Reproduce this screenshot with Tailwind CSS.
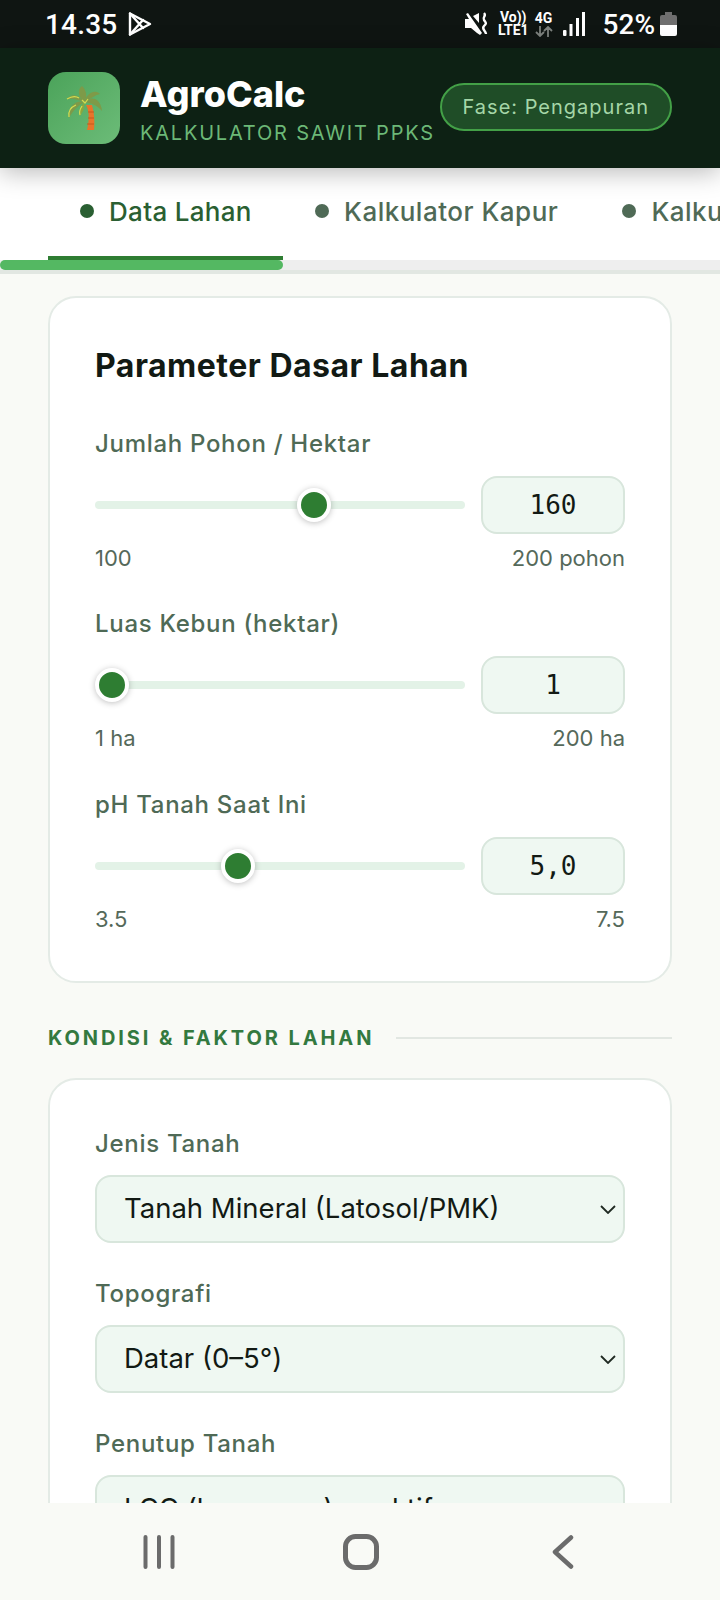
<!DOCTYPE html>
<html lang="en">
<head>
  <meta charset="UTF-8" />
  <meta name="viewport" content="width=device-width, initial-scale=1" />
  <title>AgroCalc</title>
  <script src="https://cdn.jsdelivr.net/npm/@tailwindcss/browser@4"></script>
</head>
<body class="bg-[#f9faf6] text-[#121a14] font-['Inter','Noto_Sans',sans-serif]">
  <div class="flex flex-col w-[720px] h-[1600px] overflow-hidden">
    <!-- status bar -->
    <div class="shrink-0 h-12 bg-[#0f1512] flex items-center pl-[45px] pr-[43px] text-white font-['Roboto',sans-serif]">
      <span class="text-[28px] font-medium tracking-[0.2px] pt-[2px]">14.35</span>
      <svg class="ml-[11px] w-[24px] h-[26px]" viewBox="0 0 24 26" fill="none" stroke="white" stroke-width="2.400" stroke-linejoin="round" stroke-linecap="round"><path d="M2 2.500v21l20-10.500z"/><path d="M2 2.500 15 17M2 23.500 15 9"/></svg>
      <div class="ml-auto flex items-center">
        <svg class="w-[25px] h-[24px]" viewBox="0 0 25 24">
          <path d="M0 7h4l-3-5 2-1 14 20-2 2-3-2-6-5H0z M8 4l6-3v10z" fill="white"/>
          <path d="M19 1c3 3-2 4 0 7s3 3 0 6 2 5 2 8" fill="none" stroke="white" stroke-width="2.400"/>
        </svg>
        <div class="ml-[8px] flex flex-col items-center text-[14px] leading-[13px] font-bold"><span>Vo))</span><span>LTE1</span></div>
        <div class="ml-[6px] flex flex-col items-center text-[14px] leading-[13px] font-bold">
          <span>4G</span>
          <svg class="w-[18px] h-[11px] mt-[1px]" viewBox="0 0 18 11" fill="none" stroke="#7d827e" stroke-width="1.800"><path d="M5 0v10M1 6l4 4 4-4M13 11V1M9 5l4-4 4 4"/></svg>
        </div>
        <svg class="ml-[10px] w-[22px] h-[24px]" viewBox="0 0 22 24" fill="white"><rect x="0" y="18" width="3.500" height="6" rx="1"/><rect x="6.500" y="12" width="3" height="12"/><rect x="13" y="6" width="3" height="18"/><rect x="19" y="0" width="3" height="24"/></svg>
        <span class="ml-[18px] text-[28px] font-medium pt-[2px]">52%</span>
        <svg class="ml-[5px] w-[17px] h-[24px]" viewBox="0 0 17 24"><path d="M5 0h7v3h3a2 2 0 0 1 2 2v8H0V5a2 2 0 0 1 2-2h3z" fill="#6e6e6e"/><path d="M0 13h17v9a2 2 0 0 1-2 2H2a2 2 0 0 1-2-2z" fill="white"/></svg>
      </div>
    </div>

    <!-- header -->
    <header class="relative z-10 shrink-0 h-[120px] bg-[#0d2114] flex items-center pl-12 pr-12 shadow-[0_4px_24px_rgba(0,0,0,0.28)]">
      <div class="size-[72px] rounded-[18px] bg-gradient-to-br from-[#4ba35a] to-[#6cbc78]">
        <svg class="size-full" viewBox="0 0 72 72">
          <path d="M38 33c4 7 3 17 1 25h7c1-9 0-18-2-25z" fill="#e8742a"/>
          <path d="M40 40h6M40 46h6M39 52h7" stroke="#c4581c" stroke-width="1.200"/>
          <path d="M36 30C30 24 29 18 34 14c4 4 6 10 2 16z" fill="#7e9a48"/>
          <path d="M36 30c3-9 11-13 16-8-5 1-8 4-16 8z" fill="#7e9a48"/>
          <path d="M36 30c8-7 17-3 18 9-5-6-11-8-18-9z" fill="#7e9a48"/>
          <path d="M36 30c-6-8-12-9-17-3 6-1 11 1 17 3z" fill="#7e9a48"/>
          <path d="M36 30c-8-2-16 4-15 16 4-8 9-12 15-16z" fill="#7e9a48"/>
          <path d="M36 30c-3 4-5 8-4 14 3-4 5-9 4-14z" fill="#8aa63f"/>
          <path d="M19 27c5-3 9-3 12-1M21 45c-1-6 2-10 7-12M32 43c-1-3 0-6 2-9M34 28l3 3 3-4" fill="none" stroke="#d4dc50" stroke-width="1.200"/>
        </svg>
      </div>
      <div class="ml-[20px] pt-[2px] flex flex-col">
        <span class="text-[36px] leading-[42px] font-extrabold text-white">AgroCalc</span>
        <span class="text-[20px] leading-[26px] mt-[5px] tracking-[1.800px] text-[#6cb877]">KALKULATOR SAWIT PPKS</span>
      </div>
      <div class="ml-auto mb-[2px] h-12 px-[21px] rounded-full border-2 border-[#43a047] bg-[#1f4d27] text-[#a5d6a7] text-[20px] tracking-[1px] flex items-center whitespace-nowrap">Fase: Pengapuran</div>
    </header>

    <!-- tabs -->
    <nav class="shrink-0 h-[92px] bg-white flex overflow-hidden pl-12 text-[26px] tracking-[0.500px] font-medium whitespace-nowrap text-[#4f6a56]">
      <div class="w-[235px] shrink-0 pl-[32px] pb-[2px] flex items-center gap-[15px] text-[#2a5f32] border-b-4 border-[#2e7d32]">
        <span class="size-[14px] rounded-full bg-[#2a5f32]"></span><span class="tracking-[0.300px]">Data Lahan</span>
      </div>
      <div class="shrink-0 pl-[32px] pr-[32px] pb-[6px] flex items-center gap-[15px]">
        <span class="size-[14px] rounded-full bg-[#4f6a56]"></span>Kalkulator Kapur
      </div>
      <div class="shrink-0 pl-[32px] pb-[6px] flex items-center gap-[15px]">
        <span class="size-[14px] rounded-full bg-[#4f6a56]"></span>Kalkulator Pupuk
      </div>
    </nav>

    <!-- progress -->
    <div class="shrink-0 h-[14px] bg-[#eeeeee] border-b-4 border-[#e2e7e2]">
      <div class="h-[10px] w-[283px] rounded-full bg-[#54b862]"></div>
    </div>

    <main class="flex-1 min-h-0 overflow-hidden px-12 pt-[22px]">
      <section class="h-[687px] rounded-[28px] border-2 border-[#e4ebe6] bg-white px-[45px] pt-[48px]">
        <h2 class="text-[32px] leading-[40px] font-bold tracking-[0.500px]">Parameter Dasar Lahan</h2>

        <label class="block mt-[42px] text-[24px] leading-[32px] font-medium tracking-[0.700px] text-[#4f6a56]">Jumlah Pohon / Hektar</label>
        <div class="mt-[16px] flex items-center gap-[16px]">
          <input type="range" min="100" max="200" value="160" class="w-[370px] h-2 appearance-none rounded-full bg-[#e3f2e7] [&::-webkit-slider-thumb]:appearance-none [&::-webkit-slider-thumb]:size-[34px] [&::-webkit-slider-thumb]:rounded-full [&::-webkit-slider-thumb]:bg-[#2e7d32] [&::-webkit-slider-thumb]:border-4 [&::-webkit-slider-thumb]:border-white [&::-webkit-slider-thumb]:shadow-[0_1px_6px_rgba(0,0,0,0.25)]" />
          <input type="text" value="160" class="w-[144px] h-[58px] rounded-[16px] border-2 border-[#d8e6dc] bg-[#eff8f2] text-center text-[26px] font-['DejaVu_Sans_Mono',monospace]" />
        </div>
        <div class="mt-[11px] flex justify-between text-[22px] leading-[26px] text-[#55695a]"><span>100</span><span>200 pohon</span></div>

        <label class="block mt-[37px] text-[24px] leading-[32px] font-medium tracking-[0.700px] text-[#4f6a56]">Luas Kebun (hektar)</label>
        <div class="mt-[16px] flex items-center gap-[16px]">
          <input type="range" min="1" max="200" value="1" class="w-[370px] h-2 appearance-none rounded-full bg-[#e3f2e7] [&::-webkit-slider-thumb]:appearance-none [&::-webkit-slider-thumb]:size-[34px] [&::-webkit-slider-thumb]:rounded-full [&::-webkit-slider-thumb]:bg-[#2e7d32] [&::-webkit-slider-thumb]:border-4 [&::-webkit-slider-thumb]:border-white [&::-webkit-slider-thumb]:shadow-[0_1px_6px_rgba(0,0,0,0.25)]" />
          <input type="text" value="1" class="w-[144px] h-[58px] rounded-[16px] border-2 border-[#d8e6dc] bg-[#eff8f2] text-center text-[26px] font-['DejaVu_Sans_Mono',monospace]" />
        </div>
        <div class="mt-[11px] flex justify-between text-[22px] leading-[26px] text-[#55695a]"><span>1 ha</span><span>200 ha</span></div>

        <label class="block mt-[38px] text-[24px] leading-[32px] font-medium tracking-[0.700px] text-[#4f6a56]">pH Tanah Saat Ini</label>
        <div class="mt-[16px] flex items-center gap-[16px]">
          <input type="range" min="3.5" max="7.5" step="0.1" value="5" class="w-[370px] h-2 appearance-none rounded-full bg-[#e3f2e7] [&::-webkit-slider-thumb]:appearance-none [&::-webkit-slider-thumb]:size-[34px] [&::-webkit-slider-thumb]:rounded-full [&::-webkit-slider-thumb]:bg-[#2e7d32] [&::-webkit-slider-thumb]:border-4 [&::-webkit-slider-thumb]:border-white [&::-webkit-slider-thumb]:shadow-[0_1px_6px_rgba(0,0,0,0.25)]" />
          <input type="text" value="5,0" class="w-[144px] h-[58px] rounded-[16px] border-2 border-[#d8e6dc] bg-[#eff8f2] text-center text-[26px] font-['DejaVu_Sans_Mono',monospace]" />
        </div>
        <div class="mt-[11px] flex justify-between text-[22px] leading-[26px] text-[#55695a]"><span>3.5</span><span>7.5</span></div>
      </section>

      <div class="mt-[42px] flex items-center gap-[22px]">
        <span class="text-[20px] leading-[26px] font-bold tracking-[2.900px] text-[#33793f]">KONDISI &amp; FAKTOR LAHAN</span>
        <span class="flex-1 h-[2px] bg-[#e2e7e2]"></span>
      </div>

      <section class="mt-[27px] rounded-[28px] border-2 border-[#e4ebe6] bg-white px-[45px] pt-[48px] h-[600px]">
        <label class="block text-[24px] leading-[32px] font-medium tracking-[0.700px] text-[#4f6a56]">Jenis Tanah</label>
        <div class="relative mt-[15px]">
          <select class="appearance-none w-full h-[68px] rounded-[16px] border-2 border-[#d8e6dc] bg-[#eff8f2] pl-[27px] pr-[40px] text-[27.500px]">
            <option>Tanah Mineral (Latosol/PMK)</option>
          </select>
          <svg class="absolute right-[9px] top-[30px] w-[16px] h-[9px]" viewBox="0 0 16 9" fill="none" stroke="#1f2a22" stroke-width="1.800"><path d="M1 1l7 7 7-7"/></svg>
        </div>
        <label class="block mt-[35px] text-[24px] leading-[32px] font-medium tracking-[0.700px] text-[#4f6a56]">Topografi</label>
        <div class="relative mt-[15px]">
          <select class="appearance-none w-full h-[68px] rounded-[16px] border-2 border-[#d8e6dc] bg-[#eff8f2] pl-[27px] pr-[40px] text-[27.500px]">
            <option>Datar (0–5°)</option>
          </select>
          <svg class="absolute right-[9px] top-[30px] w-[16px] h-[9px]" viewBox="0 0 16 9" fill="none" stroke="#1f2a22" stroke-width="1.800"><path d="M1 1l7 7 7-7"/></svg>
        </div>
        <label class="block mt-[35px] text-[24px] leading-[32px] font-medium tracking-[0.700px] text-[#4f6a56]">Penutup Tanah</label>
        <div class="relative mt-[15px]">
          <select class="appearance-none w-full h-[68px] rounded-[16px] border-2 border-[#d8e6dc] bg-[#eff8f2] pl-[27px] pr-[40px] text-[27.500px]">
            <option>LCC (kacangan) — aktif</option>
          </select>
        </div>
      </section>
    </main>

    <!-- android nav -->
    <div class="shrink-0 h-[97px] bg-[#f9faf6] flex items-center pl-[143px] pt-[1px]">
      <svg class="w-[32px] h-[34px]" viewBox="0 0 32 34" stroke="#6b6b6b" stroke-width="4" stroke-linecap="round"><path d="M2.500 2v30M16 2v30M29.500 2v30"/></svg>
      <svg class="ml-[168px] w-[36px] h-[36px]" viewBox="0 0 36 36" fill="none" stroke="#6b6b6b" stroke-width="5"><rect x="2.500" y="2.500" width="31" height="31" rx="10"/></svg>
      <svg class="ml-[173px] w-[22px] h-[34px]" viewBox="0 0 22 34" fill="none" stroke="#6b6b6b" stroke-width="4.500" stroke-linecap="round" stroke-linejoin="round"><path d="M19 2.500 3 17l16 14.500"/></svg>
    </div>
  </div>
</body>
</html>
